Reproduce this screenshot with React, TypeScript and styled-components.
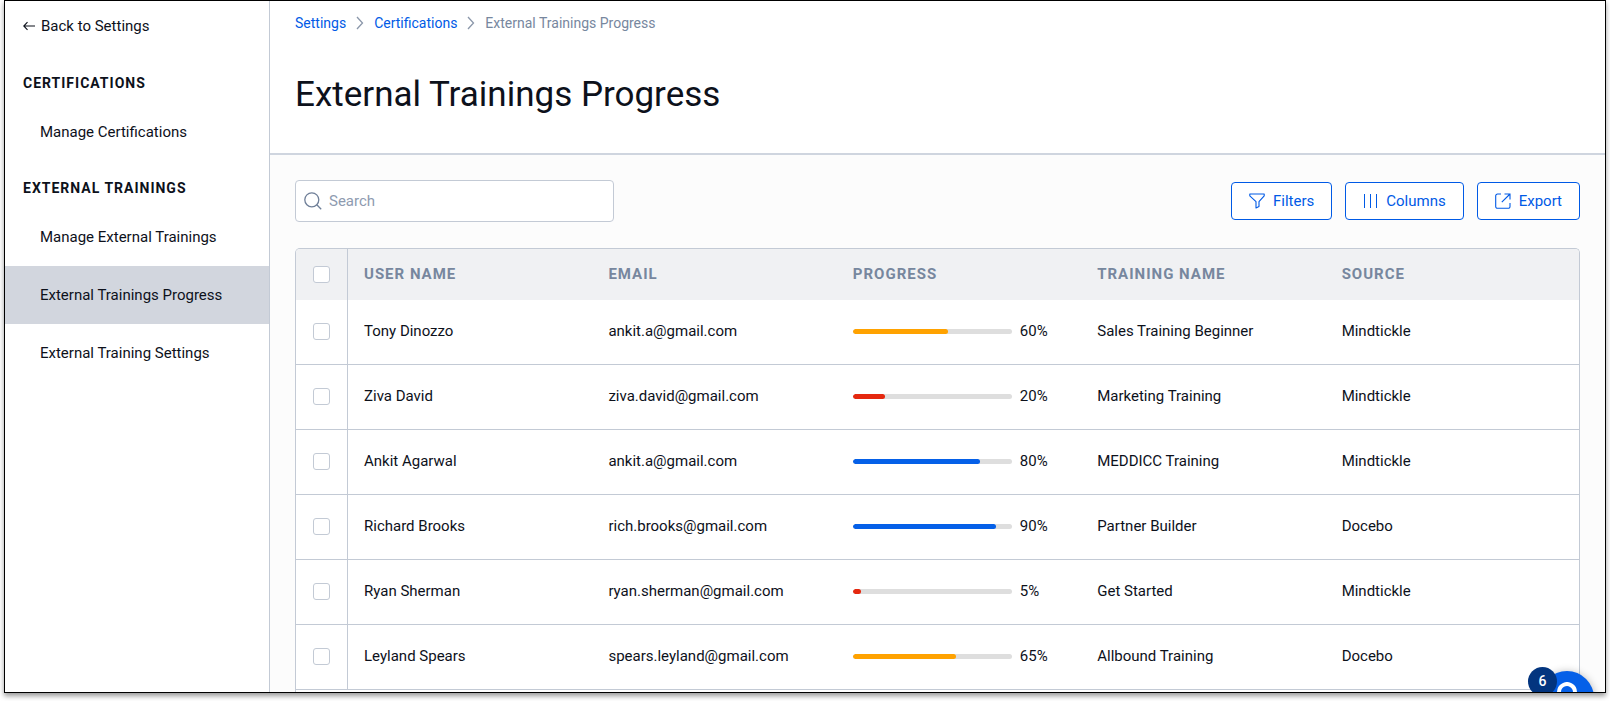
import React from "react";
import styled, { createGlobalStyle } from "styled-components";

const line = "#c3cad5";
const blue = "#005ae6";
const ink = "#0d111b";
const slate = "#77879e";

const GlobalStyle = createGlobalStyle`
  *, *::before, *::after { box-sizing: border-box; }
  body {
    margin: 0;
    background: #fff;
    color: ${ink};
    font-family: Roboto, "Liberation Sans", sans-serif;
    font-size: 15px;
    line-height: 18px;
  }
  h1, h2, ul, ol { margin: 0; padding: 0; font-weight: 400; }
  ul, ol { list-style: none; }
  a { text-decoration: none; }
  button, input { font: inherit; }
`;

const Page = styled.div`
  display: flex;
  height: 100vh;
  padding: 0 4px 8px;
  overflow: hidden;
`;

const Frame = styled.div`
  position: relative;
  display: flex;
  flex: 1;
  border: 1px solid #000;
  box-shadow: 0 3px 5px rgba(0, 0, 0, 0.4);
  overflow: hidden;
`;

const Sidebar = styled.nav`
  flex: 0 0 265px;
  border-right: 1px solid ${line};
  background: #fff;
`;

const BackLink = styled.a`
  display: flex;
  align-items: center;
  gap: 6px;
  padding: 16px 18px 21px;
  color: ${ink};
`;

const SectionTitle = styled.h2`
  padding: 18px 18px 11px;
  font-size: 14px;
  line-height: 18px;
  font-weight: 700;
  letter-spacing: 1px;
  text-transform: uppercase;
`;

const NavLink = styled.a<{ $active?: boolean }>`
  display: flex;
  align-items: center;
  height: 58px;
  padding: 0 35px;
  color: ${ink};
  background: ${(p) => (p.$active ? "#d2d6de" : "transparent")};
`;

const Main = styled.main`
  display: flex;
  flex: 1;
  flex-direction: column;
  min-width: 0;
  background: #fcfcfc;
`;

const Header = styled.header`
  flex: none;
  padding: 12px 25px 37px;
  border-bottom: 2px solid #cfd5df;
  background: #fff;
`;

const Crumbs = styled.ol`
  display: flex;
  align-items: center;
  font-size: 14px;
  line-height: 20px;
  color: ${slate};

  li { display: flex; align-items: center; }
  a { color: ${blue}; }
  svg { margin: 0 10px; }
`;

const Title = styled.h1`
  padding-top: 40px;
  font-size: 35px;
  line-height: 43px;
`;

const Content = styled.div`
  display: flex;
  flex: 1;
  flex-direction: column;
  gap: 26px;
  min-height: 0;
  padding: 25px 25px 0;
`;

const Toolbar = styled.div`
  display: flex;
  flex: none;
  align-items: center;
  justify-content: space-between;
`;

const SearchBox = styled.label`
  display: flex;
  align-items: center;
  gap: 7px;
  width: 319px;
  height: 42px;
  padding: 0 8px;
  border: 1px solid ${line};
  border-radius: 4px;
  background: #fff;
`;

const SearchInput = styled.input`
  flex: 1;
  min-width: 0;
  padding: 0;
  border: 0;
  outline: 0;
  background: none;
  color: ${ink};

  &::placeholder { color: #8e9bb0; opacity: 1; }
`;

const Actions = styled.div`
  display: flex;
  gap: 13px;
`;

const ActionButton = styled.button`
  display: flex;
  align-items: center;
  gap: 8px;
  height: 38px;
  padding: 0 17px;
  border: 1px solid ${blue};
  border-radius: 4px;
  background: #fff;
  color: ${blue};
  cursor: pointer;
`;

const Panel = styled.div`
  flex: 1;
  min-height: 0;
  border: 1px solid ${line};
  border-bottom: 0;
  border-radius: 5px 5px 0 0;
  background: #fff;
  overflow: hidden;
`;

const Table = styled.table`
  width: 100%;
  border-collapse: separate;
  border-spacing: 0;
  table-layout: fixed;
`;

const HeadCell = styled.th<{ $width?: string }>`
  width: ${(p) => p.$width ?? "auto"};
  height: 51px;
  padding: 0 16px 1px;
  background: #f0f1f3;
  color: ${slate};
  font-weight: 700;
  letter-spacing: 1px;
  text-align: left;
  text-transform: uppercase;
`;

const Cell = styled.td`
  height: 65px;
  padding: 0 16px 2px;
  border-bottom: 1px solid ${line};
`;

const HeadCheckCell = styled(HeadCell)`
  padding: 0;
  border-right: 1px solid ${line};
`;

const CheckCell = styled(Cell)`
  padding: 0 0 1px;
  border-right: 1px solid ${line};
`;

const Checkbox = styled.input`
  display: block;
  width: 17px;
  height: 17px;
  margin: 0 auto;
  border: 1px solid ${line};
  border-radius: 3px;
  background: #fff;
  appearance: none;

  &:checked { background: ${blue}; border-color: ${blue}; }
`;

const Progress = styled.div`
  display: flex;
  align-items: center;
  gap: 8px;
`;

const Track = styled.div`
  flex: 0 0 159px;
  height: 5px;
  border-radius: 3px;
  background: #dedede;
  overflow: hidden;
`;

const Bar = styled.div<{ $color: string }>`
  height: 100%;
  border-radius: 3px;
  background: ${(p) => p.$color};
`;

const HelpButton = styled.button`
  position: absolute;
  right: 11px;
  bottom: -33px;
  display: flex;
  align-items: flex-start;
  justify-content: center;
  width: 54px;
  height: 54px;
  padding: 11px 0 0;
  border: 0;
  border-radius: 50%;
  background: #0560e8;
  box-shadow: 0 1px 8px rgba(0, 0, 0, 0.3);
  cursor: pointer;
`;

const Badge = styled.span`
  position: absolute;
  right: 48px;
  bottom: -4px;
  width: 29px;
  height: 29px;
  border-radius: 50%;
  background: #03357f;
  color: #fff;
  font-size: 14px;
  font-weight: 500;
  line-height: 29px;
  text-align: center;
`;

const Chevron = () => (
  <svg width="8" height="14" viewBox="0 0 8 14" fill="none" stroke="#8b97aa" strokeWidth="1.3" aria-hidden="true">
    <path d="M1 1l5.5 6L1 13" />
  </svg>
);

const ArrowLeft = () => (
  <svg width="12" height="10" viewBox="0 0 12 10" fill="none" stroke={ink} strokeWidth="1.1" aria-hidden="true">
    <path d="M12 5H1M4.5 1.2L.8 5l3.7 3.8" />
  </svg>
);

const SearchIcon = () => (
  <svg width="18" height="18" viewBox="0 0 18 18" fill="none" stroke="#6f7f98" strokeWidth="1.3" aria-hidden="true">
    <circle cx="7.8" cy="7.8" r="7" />
    <path d="M12.8 12.8l4.4 4.4" />
  </svg>
);

const FilterIcon = () => (
  <svg width="16" height="16" viewBox="0 0 16 16" fill="none" stroke="currentColor" strokeWidth="1.1" strokeLinejoin="round" aria-hidden="true">
    <path d="M.8 1h14.4v1.8L10 8.6v5L7 15V8.6L.8 2.8z" />
  </svg>
);

const ColumnsIcon = () => (
  <svg width="15" height="16" viewBox="0 0 15 16" fill="none" stroke="currentColor" strokeWidth="1" aria-hidden="true">
    <path d="M1.5 1v14M7.5 1v14M13.5 1v14" />
  </svg>
);

const ExportIcon = () => (
  <svg width="16" height="16" viewBox="0 0 16 16" fill="none" stroke="currentColor" strokeWidth="1.1" aria-hidden="true">
    <path d="M6 1H2.5A1.8 1.8 0 0 0 .7 2.8v10.7a1.8 1.8 0 0 0 1.8 1.8h10.7a1.8 1.8 0 0 0 1.800-1.800V10" />
    <path d="M9.5 1H15v5.500M15 1L6.800 9.200" />
  </svg>
);

const amber = "#ffa200";
const red = "#e5280f";
const barBlue = "#0560e8";

const rows = [
  { name: "Tony Dinozzo", email: "ankit.a@gmail.com", pct: 60, color: amber, training: "Sales Training Beginner", source: "Mindtickle" },
  { name: "Ziva David", email: "ziva.david@gmail.com", pct: 20, color: red, training: "Marketing Training", source: "Mindtickle" },
  { name: "Ankit Agarwal", email: "ankit.a@gmail.com", pct: 80, color: barBlue, training: "MEDDICC Training", source: "Mindtickle" },
  { name: "Richard Brooks", email: "rich.brooks@gmail.com", pct: 90, color: barBlue, training: "Partner Builder", source: "Docebo" },
  { name: "Ryan Sherman", email: "ryan.sherman@gmail.com", pct: 5, color: red, training: "Get Started", source: "Mindtickle" },
  { name: "Leyland Spears", email: "spears.leyland@gmail.com", pct: 65, color: amber, training: "Allbound Training", source: "Docebo" },
];

export default function App() {
  return (
    <Page>
      <GlobalStyle />
      <Frame>
        <Sidebar>
          <BackLink href="#"><ArrowLeft />Back to Settings</BackLink>
          <SectionTitle>Certifications</SectionTitle>
          <ul>
            <li><NavLink href="#">Manage Certifications</NavLink></li>
          </ul>
          <SectionTitle>External Trainings</SectionTitle>
          <ul>
            <li><NavLink href="#">Manage External Trainings</NavLink></li>
            <li><NavLink href="#" $active aria-current="page">External Trainings Progress</NavLink></li>
            <li><NavLink href="#">External Training Settings</NavLink></li>
          </ul>
        </Sidebar>
        <Main>
          <Header>
            <Crumbs>
              <li><a href="#">Settings</a><Chevron /></li>
              <li><a href="#">Certifications</a><Chevron /></li>
              <li>External Trainings Progress</li>
            </Crumbs>
            <Title>External Trainings Progress</Title>
          </Header>
          <Content>
            <Toolbar>
              <SearchBox>
                <SearchIcon />
                <SearchInput type="text" placeholder="Search" aria-label="Search" />
              </SearchBox>
              <Actions>
                <ActionButton type="button"><FilterIcon />Filters</ActionButton>
                <ActionButton type="button"><ColumnsIcon />Columns</ActionButton>
                <ActionButton type="button"><ExportIcon />Export</ActionButton>
              </Actions>
            </Toolbar>
            <Panel>
              <Table>
                <thead>
                  <tr>
                    <HeadCheckCell $width="52px"><Checkbox type="checkbox" aria-label="Select all" /></HeadCheckCell>
                    <HeadCell $width="19.05%">User name</HeadCell>
                    <HeadCell $width="19.05%">Email</HeadCell>
                    <HeadCell $width="19.05%">Progress</HeadCell>
                    <HeadCell $width="19.05%">Training name</HeadCell>
                    <HeadCell>Source</HeadCell>
                  </tr>
                </thead>
                <tbody>
                  {rows.map((r) => (
                    <tr key={r.name}>
                      <CheckCell><Checkbox type="checkbox" aria-label={`Select ${r.name}`} /></CheckCell>
                      <Cell>{r.name}</Cell>
                      <Cell>{r.email}</Cell>
                      <Cell>
                        <Progress>
                          <Track><Bar $color={r.color} style={{ width: `${r.pct}%` }} /></Track>
                          {r.pct}%
                        </Progress>
                      </Cell>
                      <Cell>{r.training}</Cell>
                      <Cell>{r.source}</Cell>
                    </tr>
                  ))}
                </tbody>
              </Table>
            </Panel>
          </Content>
        </Main>
        <HelpButton type="button" aria-label="Help">
          <svg width="20" height="28" viewBox="0 0 20 28" fill="none" stroke="#fff" strokeWidth="4" aria-hidden="true">
            <path d="M2 10a8 8 0 1 1 12 7c-3 1.6-4 2.5-4 5" />
          </svg>
        </HelpButton>
        <Badge>6</Badge>
      </Frame>
    </Page>
  );
}
